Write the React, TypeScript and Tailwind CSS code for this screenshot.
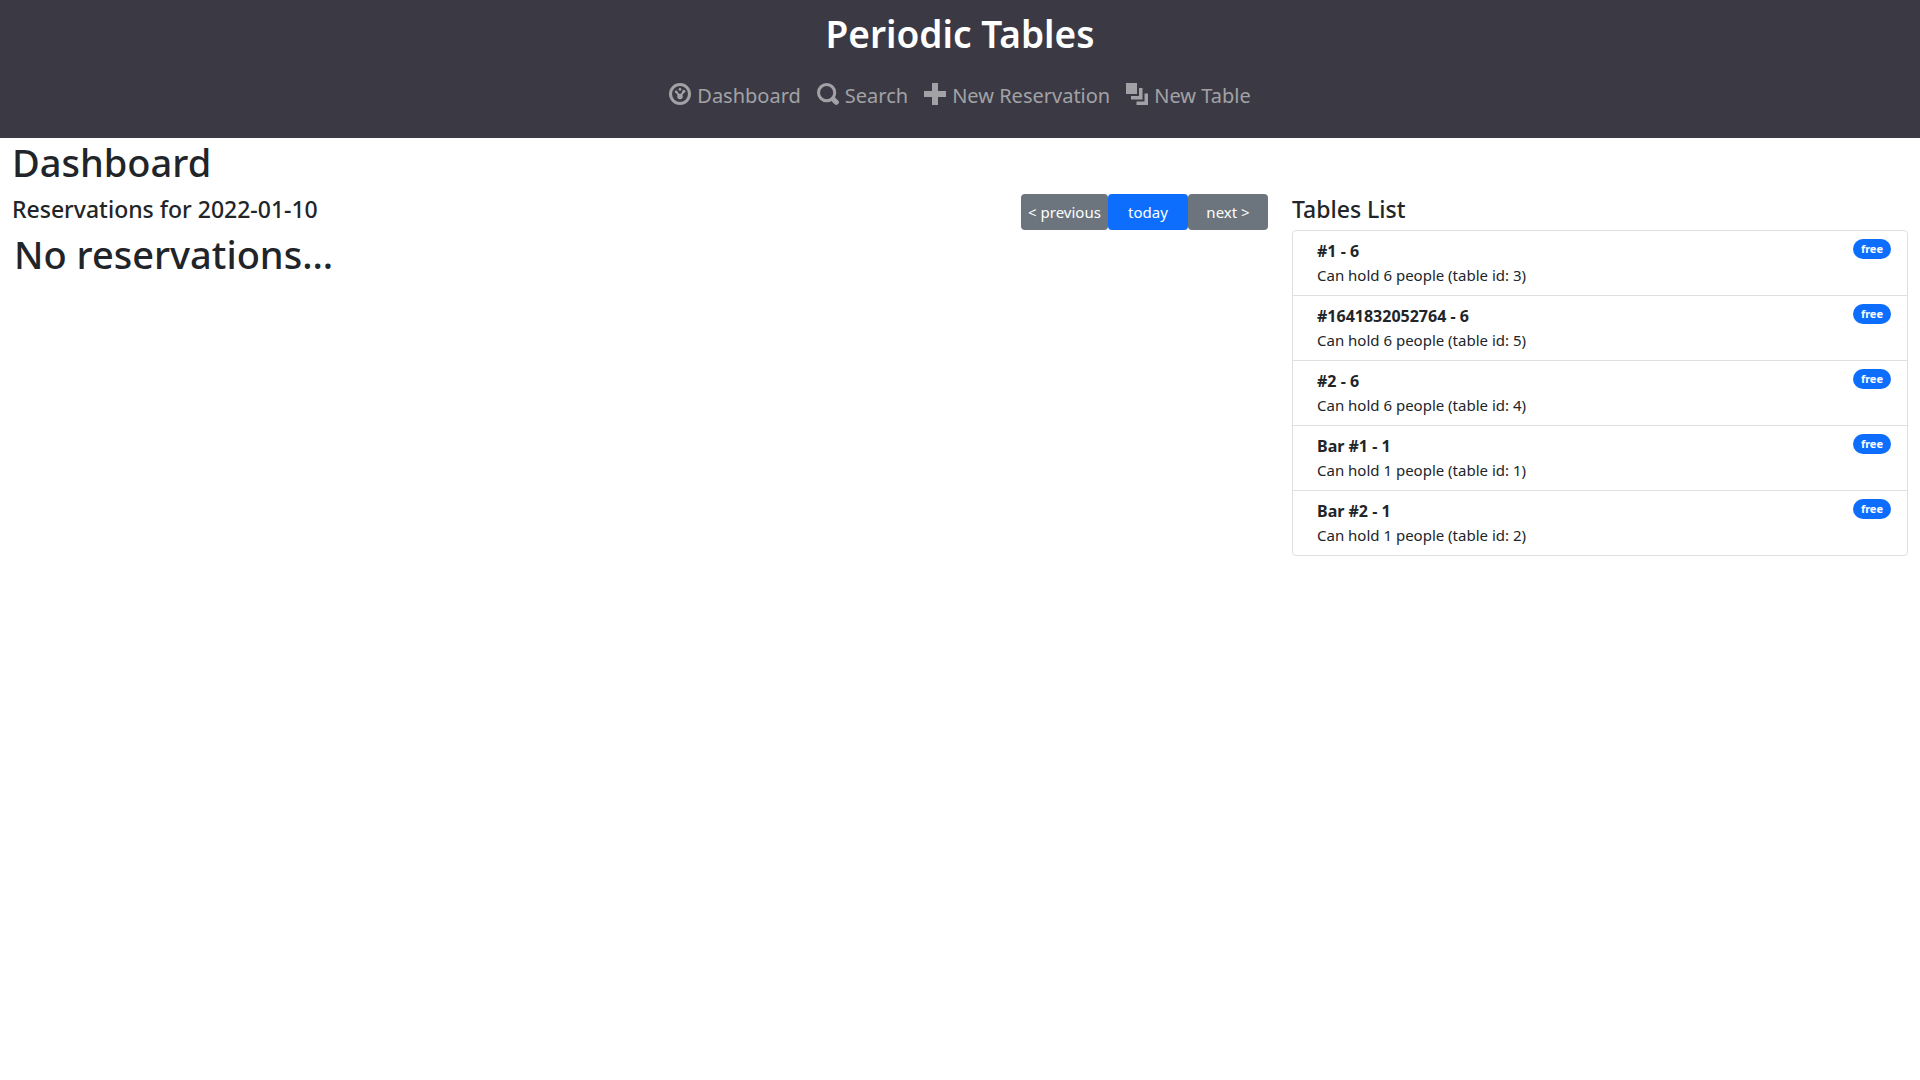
const iconClass = "mb-1 size-[22px] shrink-0";

function DashboardIcon() {
  return (
    <svg viewBox="0 0 8 8" className={iconClass} fill="currentColor" stroke="currentColor" aria-hidden="true">
      <circle cx="4" cy="4" r="3.45" fill="none" strokeWidth="1.1" />
      <g stroke="none">
        <circle cx="4" cy="2.3" r="0.5" />
        <circle cx="2.6" cy="3.2" r="0.5" />
        <circle cx="5.4" cy="3" r="0.55" />
        <circle cx="4" cy="4.9" r="1" />
      </g>
      <path d="M2.7 3.3 3.8 4.6M5.3 3.2 4.2 4.6" fill="none" strokeWidth="0.7" />
    </svg>
  );
}

function SearchIcon() {
  return (
    <svg viewBox="0 0 8 8" className={iconClass} fill="none" stroke="currentColor" aria-hidden="true">
      <circle cx="3.5" cy="3.5" r="2.95" strokeWidth="1.1" />
      <path d="M5.9 5.9 7 7" strokeWidth="1.9" strokeLinecap="round" />
    </svg>
  );
}

function PlusIcon() {
  return (
    <svg viewBox="0 0 22 22" className={iconClass} fill="currentColor" aria-hidden="true">
      <path d="M8 0h6v8h8v6h-8v8h-6v-8h-8v-6h8z" />
    </svg>
  );
}

function LayersIcon() {
  return (
    <svg viewBox="0 0 22 22" className={iconClass} fill="currentColor" aria-hidden="true">
      <path d="M0 0h11v11h-11zM13 5h3.5v11.5h-11.5v-3.5h8zM18.500 10.500h3.500v11.500h-11.500v-3.500h8z" />
    </svg>
  );
}

const links = [
  { Icon: DashboardIcon, label: "Dashboard" },
  { Icon: SearchIcon, label: "Search" },
  { Icon: PlusIcon, label: "New Reservation" },
  { Icon: LayersIcon, label: "New Table" },
];

const tables = [
  { id: 3, name: "#1", capacity: 6 },
  { id: 5, name: "#1641832052764", capacity: 6 },
  { id: 4, name: "#2", capacity: 6 },
  { id: 1, name: "Bar #1", capacity: 1 },
  { id: 2, name: "Bar #2", capacity: 1 },
];

function Header() {
  return (
    <header className="flex flex-col items-center bg-[#3b3a44] px-3 pt-3 pb-[26px]">
      <h1 className="text-[37px] leading-11 font-semibold text-white">Periodic Tables</h1>
      <nav className="mt-6 flex items-center gap-4 text-[20px] leading-8 text-[#a2a2a6]">
        {links.map(({ Icon, label }) => (
          <a key={label} href="#" className="flex items-center gap-1.5 whitespace-nowrap">
            <Icon />
            {label}
          </a>
        ))}
      </nav>
    </header>
  );
}

function TableRow({ id, name, capacity }: { id: number; name: string; capacity: number }) {
  return (
    <li className="flex items-start justify-between border-b border-[#dfdfdf] py-2 pr-4 pl-6 last:border-b-0">
      <div>
        <div className="text-[16px] leading-6 font-bold">
          {name} - {capacity}
        </div>
        <div className="text-[15px] leading-6">
          Can hold {capacity} people (table id: {id})
        </div>
      </div>
      <span className="rounded-full bg-[#0d6efd] px-2 text-[11px] leading-5 font-bold text-white">free</span>
    </li>
  );
}

export default function App() {
  return (
    <div className="min-h-screen bg-white font-['Noto_Sans',sans-serif] text-[#212529]">
      <Header />
      <main className="px-3">
        <h1 className="text-[38px] leading-12 font-medium">Dashboard</h1>
        <div className="mt-2 grid grid-cols-3 gap-x-6">
          <section className="col-span-2">
            <div className="flex items-start justify-between">
              <h4 className="text-[23px] leading-[30px] font-medium">Reservations for 2022-01-10</h4>
              <div className="flex text-[15px] leading-9 text-white">
                <button type="button" className="w-[87px] rounded bg-[#6c757d]">{"< previous"}</button>
                <button type="button" className="w-20 rounded bg-[#0d6efd]">today</button>
                <button type="button" className="w-20 rounded bg-[#6c757d]">{"next >"}</button>
              </div>
            </div>
            <h1 className="pl-0.5 text-[38px] leading-12 font-medium">No reservations...</h1>
          </section>
          <section>
            <h4 className="text-[23px] leading-[30px] font-medium">Tables List</h4>
            <ul className="mt-1.5 rounded border border-[#dfdfdf]">
              {tables.map((t) => (
                <TableRow key={t.id} {...t} />
              ))}
            </ul>
          </section>
        </div>
      </main>
    </div>
  );
}
